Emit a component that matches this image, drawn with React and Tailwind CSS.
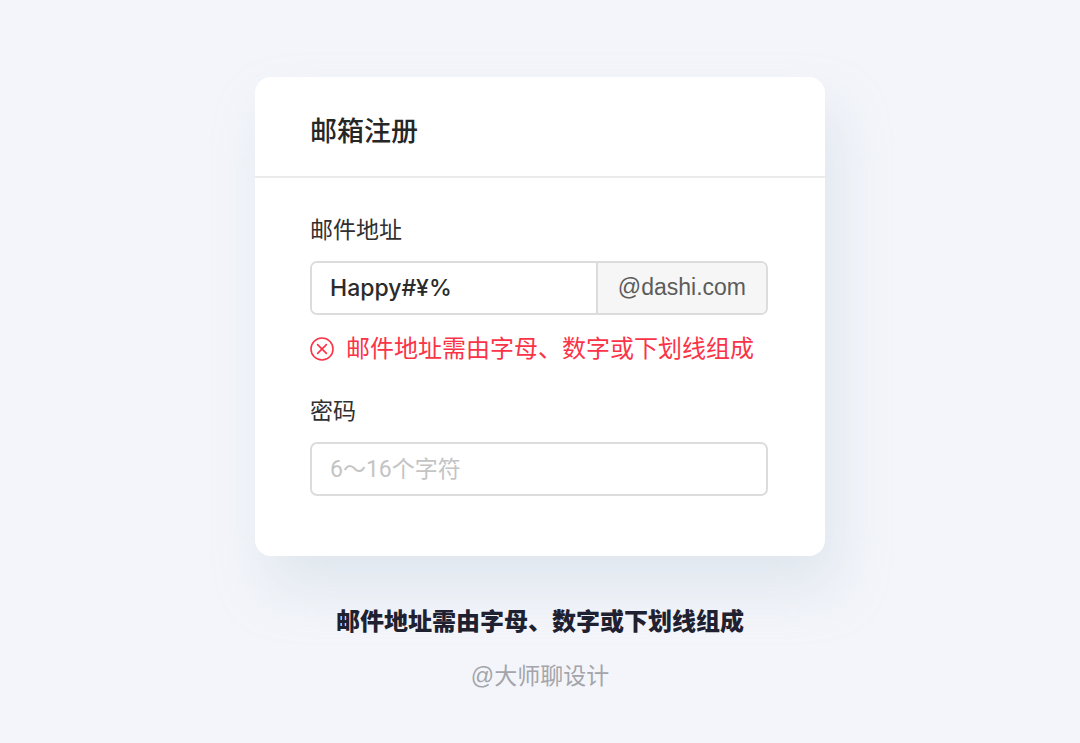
import { useState } from 'react';

const ErrorIcon = () => (
  <svg viewBox="0 0 24 24" fill="none" stroke="currentColor" strokeWidth="1.6"
    strokeLinecap="round" className="w-6 h-6 shrink-0" aria-hidden="true">
    <circle cx="12" cy="12" r="11" />
    <path d="M7.6 7.6l8.8 8.8M16.4 7.6l-8.8 8.8" />
  </svg>
);

export default function App() {
  const [email, setEmail] = useState('Happy#¥%');
  const [password, setPassword] = useState('');

  return (
    <main className="min-h-screen bg-[#f3f5fa] px-6 pt-[77px] pb-12 flex flex-col items-center font-['Liberation_Sans','Noto_Sans_CJK_SC',sans-serif] text-[23px]">
      <form noValidate onSubmit={e => e.preventDefault()}
        className="w-full max-w-[570px] rounded-2xl bg-white shadow-[12px_32px_52px_rgba(195,207,222,0.38)]">
        {/* Header */}
        <header className="border-b-2 border-[#ebebeb] px-[55px] pt-[35px] pb-7">
          <h1 className="text-[27px] leading-9 font-medium text-[#262626] font-['Noto_Sans_CJK_SC',sans-serif]">邮箱注册</h1>
        </header>

        <div className="pl-[55px] pr-[57px] pt-8 pb-15">
          {/* Email */}
          <label htmlFor="email" className="block leading-10 text-[#303030]">邮件地址</label>
          <div className="mt-[11px] flex h-[54px] rounded-[7px] border-2 border-[#dcdcdc] overflow-hidden">
            <input id="email" type="text" value={email} onChange={e => setEmail(e.target.value)}
              aria-invalid="true" aria-describedby="email-error"
              className="min-w-0 flex-1 bg-white pl-[18px] pr-4 font-medium text-[#2b2b2b] outline-none font-['Inter',sans-serif]" />
            <span className="flex items-center border-l-2 border-[#dcdcdc] bg-[#f6f6f6] px-5 pb-0.5 text-[#5c5c5c]">@dashi.com</span>
          </div>
          <p id="email-error" className="mt-4 flex items-center gap-3 text-2xl leading-9 text-[#fb3347] whitespace-nowrap">
            <ErrorIcon />
            邮件地址需由字母、数字或下划线组成
          </p>

          {/* Password */}
          <label htmlFor="password" className="mt-6 block leading-10 text-[#303030]">密码</label>
          <input id="password" type="password" value={password} onChange={e => setPassword(e.target.value)}
            placeholder="6～16个字符"
            className="mt-[11px] block h-[54px] w-full rounded-[7px] border-2 border-[#dcdcdc] bg-white px-[18px] text-[#2b2b2b] placeholder:text-[#c4c4c4] outline-none font-['Roboto','Noto_Sans_CJK_SC',sans-serif]" />
        </div>
      </form>

      {/* Caption */}
      <p className="mt-[46px] text-2xl leading-10 font-black text-[#1f2130]">邮件地址需由字母、数字或下划线组成</p>
      <p className="mt-4 leading-9 text-[#a4a5aa]">@大师聊设计</p>
    </main>
  );
}
